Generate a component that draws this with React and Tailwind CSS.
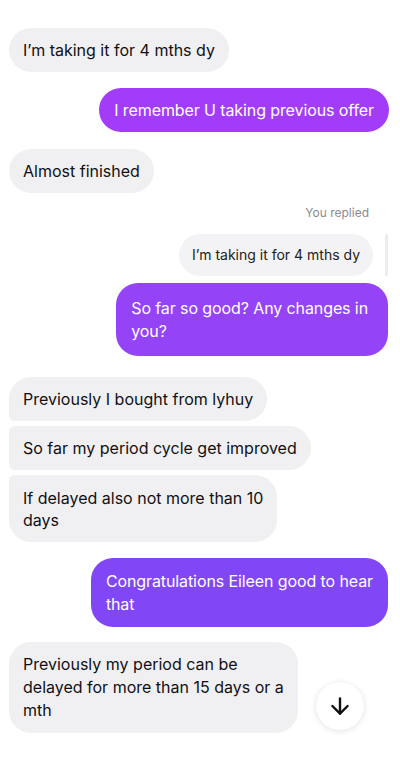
import { ArrowDown } from "lucide-react";

const font = { fontFamily: "Inter, 'Noto Sans', sans-serif" };

function Lines({ lines }) {
    return lines.map((l, i) => (
        <span key={i} className="block whitespace-nowrap">
            {l}
        </span>
    ));
}

function Theirs({ lines, corners = "rounded-[22px]", className = "py-[11px] leading-[22px]" }) {
    return (
        <div className={`self-start bg-[#f0f0f2] px-[14px] text-[16px] text-[#111114] ${corners} ${className}`}>
            <Lines lines={lines} />
        </div>
    );
}

function Mine({ lines, color, className = "py-[11px] leading-[22px]" }) {
    return (
        <div className={`self-end rounded-[22px] px-[15px] text-[16px] tracking-[-0.1px] text-white ${color} ${className}`}>
            <Lines lines={lines} />
        </div>
    );
}

export default function App() {
    return (
        <div className="relative h-[763px] w-[400px] overflow-hidden bg-white" style={font}>
            <div className="flex flex-col pl-[9px] pr-[12px] pt-[28px]">
                <Theirs lines={["I’m taking it for 4 mths dy"]} />
                <Mine
                    lines={["I remember U taking previous offer"]}
                    color="bg-[#a33cf8]"
                    className="mt-[16px] mr-[-1px] py-[11px] leading-[22px]"
                />
                <Theirs lines={["Almost finished"]} className="mt-[17px] py-[11px] leading-[22px]" />

                <div className="mt-[12px] self-end pr-[19px] text-[12px] leading-[16px] text-[#8a8a8e]">You replied</div>
                <div className="mt-[13px] flex items-stretch gap-[12px] self-end">
                    <div className="rounded-[21px] bg-[#f3f3f5] px-[13px] py-[10px] text-[14px] leading-[22px] text-[#222]">
                        I’m taking it for 4 mths dy
                    </div>
                    <div className="w-[3px] rounded-full bg-[#ececee]"></div>
                </div>
                <Mine
                    lines={["So far so good? Any changes in", "you?"]}
                    color="bg-[#9543f7]"
                    className="mt-[7px] py-[13.5px] pr-[20px] leading-[23px]"
                />

                <div className="mt-[21px] flex flex-col gap-[5px]">
                    <Theirs lines={["Previously I bought from lyhuy"]} corners="rounded-[22px] rounded-bl-[6px]" />
                    <Theirs lines={["So far my period cycle get improved"]} corners="rounded-r-[22px] rounded-l-[6px]" />
                    <Theirs
                        lines={["If delayed also not more than 10", "days"]}
                        corners="rounded-[22px] rounded-tl-[6px]"
                        className="py-[11.5px] leading-[22px]"
                    />
                </div>

                <Mine
                    lines={["Congratulations Eileen good to hear", "that"]}
                    color="bg-[#8147f6]"
                    className="mt-[16px] py-[11.5px] leading-[23px]"
                />
                <Theirs
                    lines={["Previously my period can be", "delayed for more than 15 days or a", "mth"]}
                    className="mt-[15px] py-[11px] leading-[23px]"
                />
            </div>

            <button className="absolute left-[316px] top-[682px] flex h-[48px] w-[48px] items-center justify-center rounded-full bg-white shadow-[0_1px_6px_rgba(0,0,0,0.12)]">
                <ArrowDown size={26} strokeWidth={2.2} className="text-[#111]" />
            </button>
        </div>
    );
}
